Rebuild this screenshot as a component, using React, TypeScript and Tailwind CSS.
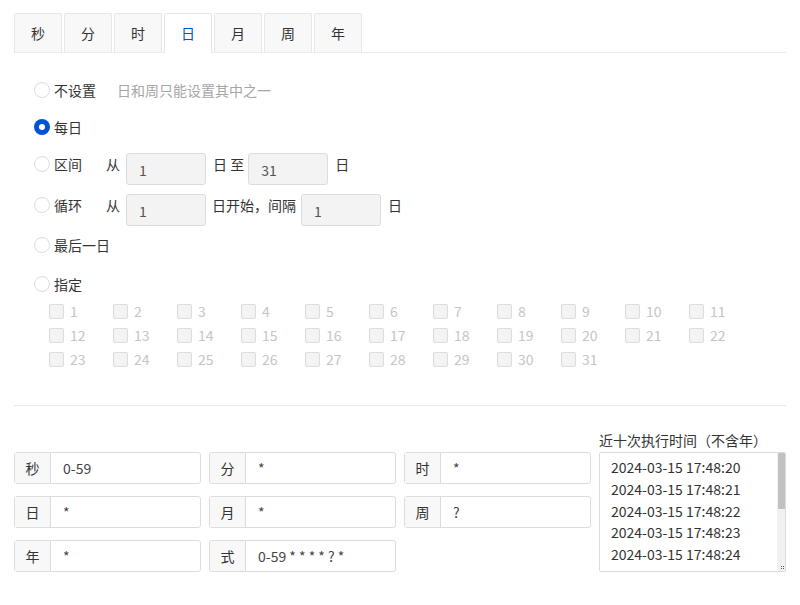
import React from "react";

const FONT = { fontFamily: '"Noto Sans CJK SC", "Noto Sans", sans-serif' };

const tabs = ["秒", "分", "时", "日", "月", "周", "年"];

function Radio({ checked }: { checked?: boolean }) {
  return checked ? (
    <span className="flex h-4 w-4 items-center justify-center rounded-full bg-[#0052d9]">
      <span className="h-[6px] w-[6px] rounded-full bg-white" />
    </span>
  ) : (
    <span className="h-4 w-4 rounded-full border border-[#dcdcdc] bg-white" />
  );
}

function Box({ value, w = "w-20" }: { value: string; w?: string }) {
  return (
    <div className={`${w} mt-px flex h-8 items-center rounded-[3px] border border-[#dcdcdc] bg-[#f3f3f3] pl-3 pt-[2px] text-[#555]`}>
      {value}
    </div>
  );
}

function RadioRow({
  h,
  checked,
  label,
  children,
}: {
  h: string;
  checked?: boolean;
  label: string;
  children?: React.ReactNode;
}) {
  return (
    <div className={`${h} flex items-start`}>
      <div className="flex h-6 items-center">
        <Radio checked={checked} />
        <span className="ml-1 w-[52px] whitespace-nowrap">{label}</span>
      </div>
      {children}
    </div>
  );
}

function Group({ addon, value }: { addon: string; value: string }) {
  return (
    <div className="flex h-8 w-[187px] rounded-[3px] border border-[#dcdcdc] bg-white">
      <div className="flex w-[36px] items-center justify-center border-r border-[#dcdcdc] bg-[#f8f8f8] text-[#333]">
        {addon}
      </div>
      <div className="flex flex-1 items-center pl-3 text-[#444]">{value}</div>
    </div>
  );
}

export default function App() {
  const days = Array.from({ length: 31 }, (_, i) => i + 1);
  const times = [
    "2024-03-15 17:48:20",
    "2024-03-15 17:48:21",
    "2024-03-15 17:48:22",
    "2024-03-15 17:48:23",
    "2024-03-15 17:48:24",
  ];
  return (
    <div className="h-[605px] w-[800px] bg-white px-[14px] pt-[14px] text-[14px] text-[#333]" style={FONT}>
      {/* tabs */}
      <div className="flex h-[39px] items-end gap-[2px] border-b border-[#ebebeb]">
        {tabs.map((t) =>
          t === "日" ? (
            <div
              key={t}
              className="-mb-px flex h-[40px] w-[48px] items-center justify-center rounded-t-[2px] border border-b-0 border-[#e7e7e7] bg-white text-[#0052d9]"
            >
              {t}
            </div>
          ) : (
            <div
              key={t}
              className="flex h-[39px] w-[48px] items-center justify-center rounded-t-[2px] border border-b-0 border-[#e7e7e7] bg-[#f8f8f8]"
            >
              {t}
            </div>
          )
        )}
      </div>

      {/* options */}
      <div className="flex flex-col pl-[20px] pt-[25px]">
        <RadioRow h="h-[37px]" label="不设置">
          <span className="flex h-6 items-center whitespace-nowrap pl-[11px] text-[#a6a6a6]">日和周只能设置其中之一</span>
        </RadioRow>
        <RadioRow h="h-[37px]" checked label="每日" />
        <RadioRow h="h-[41px]" label="区间">
          <span className="mr-[6px] flex h-6 items-center">从</span>
          <Box value="1" />
          <span className="ml-[7px] mr-[4px] flex h-6 items-center whitespace-nowrap">日 至</span>
          <Box value="31" />
          <span className="ml-[7px] flex h-6 items-center">日</span>
        </RadioRow>
        <RadioRow h="h-[40px]" label="循环">
          <span className="mr-[6px] flex h-6 items-center">从</span>
          <Box value="1" />
          <span className="ml-[6px] mr-[5px] flex h-6 items-center whitespace-nowrap">日开始，间隔</span>
          <Box value="1" />
          <span className="ml-[7px] flex h-6 items-center">日</span>
        </RadioRow>
        <RadioRow h="h-[39px]" label="最后一日" />
        <RadioRow h="h-[27px]" label="指定" />
        <div className="grid grid-cols-[repeat(11,64px)] pl-[15px]">
          {days.map((d) => (
            <div key={d} className="flex h-6 items-center">
              <span className="h-[15px] w-[15px] rounded-[2px] border border-[#dcdcdc] bg-[#f3f3f3]" />
              <span className="ml-[6px] text-[#c5c5c5]">{d}</span>
            </div>
          ))}
        </div>
      </div>

      {/* divider */}
      <div className="mt-[34px] h-px bg-[#ebebeb]" />

      {/* bottom */}
      <div className="mt-[24px] flex items-end gap-2">
        <div className="grid grid-cols-3 gap-x-2 gap-y-3">
          <Group addon="秒" value="0-59" />
          <Group addon="分" value="*" />
          <Group addon="时" value="*" />
          <Group addon="日" value="*" />
          <Group addon="月" value="*" />
          <Group addon="周" value="?" />
          <Group addon="年" value="*" />
          <Group addon="式" value="0-59 * * * * ? *" />
        </div>
        <div className="flex w-[187px] flex-col">
          <div className="mb-[2px] h-5 whitespace-nowrap leading-5">近十次执行时间（不含年）</div>
          <div className="flex h-[120px] overflow-hidden rounded-[2px] border border-[#dcdcdc] bg-white">
            <div className="flex-1 overflow-hidden pl-[11px] pt-[4px] leading-[21.75px] text-[#333]">
              {times.map((t) => (
                <div key={t} className="whitespace-nowrap">{t}</div>
              ))}
            </div>
            <div className="flex w-[8px] flex-col bg-[#f1f1f1]">
              <div className="mx-auto h-[56px] w-[7px] rounded-[1px] bg-[#c1c1c1]" />
              <div className="flex-1" />
              <div className="relative h-[8px] w-[8px]">
                <span className="absolute bottom-[2px] right-[1px] h-[1px] w-[1px] bg-[#555]" />
                <span className="absolute bottom-[4px] right-[3px] h-[1px] w-[1px] bg-[#555]" />
                <span className="absolute bottom-[2px] right-[3px] h-[1px] w-[1px] bg-[#555]" />
                <span className="absolute bottom-[4px] right-[1px] h-[1px] w-[1px] bg-[#555]" />
              </div>
            </div>
          </div>
        </div>
      </div>
    </div>
  );
}
